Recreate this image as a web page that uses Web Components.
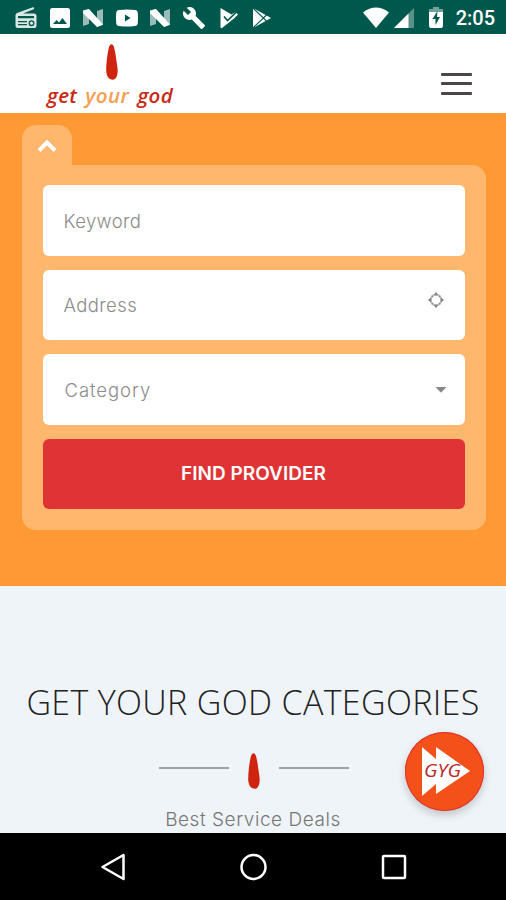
<!DOCTYPE html>
<html lang="en">
<head>
<meta charset="utf-8">
<title>Get Your God</title>
<style>
html,body{margin:0;height:100%}
body{font-family:Inter,"Open Sans",sans-serif;background:#eff4f8}
</style>
</head>
<body>
<gyg-app></gyg-app>
<script>
function define(name, html) {
  const template = document.createElement('template');
  template.innerHTML = html;
  customElements.define(name, class extends HTMLElement {
    constructor() {
      super();
      this.attachShadow({mode: 'open'}).append(template.content.cloneNode(true));
    }
  });
}

define('status-bar', `
<style>
:host{display:flex;height:34px;box-sizing:border-box;background:#00574b;color:#fff;justify-content:space-between;padding:6px 11px 5px 14px;align-items:center}
div{display:flex;align-items:center}
svg{display:block;fill:#fff}
.left{gap:9.6px}
.time{font:500 20px/23px Roboto,sans-serif;letter-spacing:0;margin:2px 0 0 13px}
</style>
<div class="left">
<svg width="24" height="24" viewBox="0 0 24 24"><path opacity=".85" d="M3 7 19.500 1l.8 2L9 7.500h11q2.500 0 2.500 2.500v10q0 2-2 2h-17q-2 0-2-2V9.500Q1.500 7.500 3 7z"/><path fill="#00574b" d="M4 10h16v2.200H4zM4 15h9v1.300H4zM4 18h9v1.300H4z"/><circle cx="17.500" cy="17.200" r="2.300" fill="none" stroke="#00574b" stroke-width="1.300"/></svg>
<svg width="24" height="24" viewBox="0 0 24 24"><path fill-rule="evenodd" d="M4.500 2h15Q22 2 22 4.500v15Q22 22 19.500 22h-15Q2 22 2 19.500v-15Q2 2 4.500 2zM5 18h14l-4.500-6-3.500 4.500L8.500 14z"/></svg>
<svg width="24" height="24" viewBox="0 0 24 24"><path opacity=".6" d="M2 5 8 3v15l-6 2zM16 5l6-2v16l-6 2z"/><path d="M2 4.500 8 3l14 15.500-6 2.500L2 7z"/></svg>
<svg width="24" height="24" viewBox="0 0 24 24"><path fill-rule="evenodd" d="M4 4q8-1 16 0 2.500 0 2.800 3 .5 5 0 10-.3 3-2.800 3-8 1-16 0-2.500 0-2.800-3-.5-5 0-10Q1.500 4 4 4zM10 8.500v7l5.500-3.500z"/></svg>
<svg width="24" height="24" viewBox="0 0 24 24"><path opacity=".6" d="M2 5 8 3v15l-6 2zM16 5l6-2v16l-6 2z"/><path d="M2 4.500 8 3l14 15.500-6 2.500L2 7z"/></svg>
<svg width="24" height="24" viewBox="0 0 24 24"><path d="M22.700 19l-9.100-9.100c.9-2.300.4-5-1.500-6.900-2-2-5-2.400-7.400-1.300L9 6 6 9 1.600 4.700C.4 7.100.9 10.100 2.900 12.100c1.900 1.900 4.600 2.400 6.900 1.500l9.100 9.100c.4.400 1 .4 1.400 0l2.300-2.300c.5-.4.5-1.100.1-1.400z"/></svg>
<svg width="24" height="24" viewBox="0 0 24 24"><path d="M4.500 2 15.500 8.500l4-2.500 2.500 2.500-4 4L6 22q-1.500.5-1.500-1z"/><path fill="none" stroke="#00574b" stroke-width="1.700" d="m8 10.500 3.500 4 9-8.500"/></svg>
<svg width="24" height="24" viewBox="0 0 24 24"><path d="M4 2 22 12 4 22z"/><path fill="none" stroke="#00574b" stroke-width="1.100" d="m4 2 13.500 13M4 22 17.500 9"/></svg>
</div>
<div>
<svg width="26" height="22" viewBox="0 0 26 22"><path d="M0 5.500Q13-4.500 26 5.500L13 21z"/></svg>
<svg width="20" height="20" viewBox="0 0 20 20" style="margin-left:5px"><path opacity=".35" d="M20 0v20H0z"/><path d="M14.500 5.500V20H0z"/></svg>
<svg width="14" height="21" viewBox="0 0 14 21" style="margin-left:15px"><path opacity=".45" d="M4 0h6v2h4v5H0V2h4z"/><path d="M0 5h14v14q0 2-2 2H2q-2 0-2-2z"/><path fill="#00574b" d="m8.500 4-5 8h3v6l4.500-8H8z"/></svg>
<span class="time">2:05</span>
</div>`);

define('flame-mark', `
<style>:host{display:block;width:12px;height:36px}svg{display:block;width:100%;height:100%}</style>
<svg viewBox="0 0 12 36" preserveAspectRatio="none"><path fill="#cf2410" d="M5.300.2C7.300 0 8.400 3 9.500 10c.6 5 2 12 2.200 16 .2 6-2 9.800-4.900 9.800C2.800 35.800.2 32 .2 26 .3 18 1.500 10 2.500 5 3.200 2 4 .4 5.300.2z"/></svg>`);

define('site-header', `
<style>
:host{display:flex;height:79px;box-sizing:border-box;background:#fff;justify-content:space-between;align-items:flex-start;padding:9.500px 34px 0 46px}
.logo{display:flex;flex-direction:column;align-items:center;width:128px}
flame-mark{height:36px;margin-left:4px}
.name{font:italic 600 20.500px/24px "Open Sans",sans-serif;color:#c72a17;white-space:nowrap;display:flex;justify-content:space-between;width:126px;margin-top:3px;letter-spacing:.3px}
.name i{color:#f3a052;letter-spacing:.5px}
.menu{display:grid;gap:6.700px;padding-top:29px;width:31px}
.menu b{height:3px;background:#4b4647;border-radius:1px}
</style>
<div class="logo"><flame-mark></flame-mark><div class="name"><span>get</span><i>your</i><span>god</span></div></div>
<div class="menu"><b></b><b></b><b></b></div>`);

define('form-field', `
<style>
:host{display:flex;height:70.500px;box-sizing:border-box;background:#fff;border-radius:6px;padding:1px 18px 0 21px;align-items:center;justify-content:space-between;color:#8c8c8c;font:300 18.500px/28px Inter,sans-serif;letter-spacing:var(--track,0)}
</style>
<slot></slot><slot name="icon"></slot>`);

define('search-panel', `
<style>
:host{display:block;height:473px;box-sizing:border-box;background:#ff9933;padding:12px 20.500px 0 21.500px}
.tab{width:50.500px;height:39.500px;border-radius:14px 14px 0 0;background:#ffb66d;display:flex;justify-content:center;padding-top:15px;box-sizing:border-box}
.box{height:365.500px;box-sizing:border-box;background:#ffb66d;border-radius:0 14px 14px 14px;padding:20.500px 21px;display:flex;flex-direction:column;gap:14px}
svg{display:block}
button{height:70px;flex:none;border:0;border-radius:6px;background:#df3335;color:#fff;font:600 19px/28px Inter,sans-serif;letter-spacing:.02px;padding:0}
</style>
<div class="tab"><svg width="20" height="12" viewBox="0 0 20 12"><path d="m2 10.500 8-8 8 8" fill="none" stroke="#fff" stroke-width="4"/></svg></div>
<div class="box">
<form-field style="--track:.4px">Keyword</form-field>
<form-field style="--track:.4px">Address<svg slot="icon" width="18" height="18" viewBox="0 0 18 18" style="margin:-11px 2px 0 0"><circle cx="9" cy="9" r="5.300" fill="none" stroke="#888" stroke-width="1.800"/><path fill="#888" stroke="#fff" stroke-width=".5" d="m9 .5 3.300 4.300H5.700zM9 17.500l3.300-4.300H5.700zM.5 9l4.300-3.300v6.600zM17.500 9l-4.300-3.300v6.600z"/></svg></form-field>
<form-field style="--track:.95px;padding-left:22px">Category<svg slot="icon" width="12" height="6" viewBox="0 0 12 6"><path fill="#888" d="M.5 0h11L6 5.800z"/></svg></form-field>
<button>FIND PROVIDER</button>
</div>`);

define('category-section', `
<style>
:host{display:flex;flex-direction:column;align-items:center;height:247px;box-sizing:border-box;background:#eff4f8;padding-top:92px;overflow:hidden}
h1{margin:0;font:300 34px/48px "Open Sans",sans-serif;letter-spacing:.33px;color:#222;white-space:nowrap}
.rule{display:flex;align-items:center;gap:19px;margin-top:27px;padding-left:1px}
.rule b{width:70px;height:2px;background:#a0a3a6;margin-top:-6px}
p{margin:16.500px 0 0;font:300 19px/28px Inter,sans-serif;letter-spacing:.55px;color:#777;white-space:nowrap}
</style>
<h1>GET YOUR GOD CATEGORIES</h1>
<div class="rule"><b></b><flame-mark></flame-mark><b></b></div>
<p>Best Service Deals</p>`);

define('play-badge', `
<style>
:host{position:absolute;left:405px;top:732px;width:79px;height:79px;border-radius:50%;background:#f4511a;box-shadow:0 4px 8px #0003,inset 0 0 0 1px #dd3330}
svg{display:block}
text{font:italic 400 18px "Open Sans",sans-serif;fill:#b92629}
</style>
<svg width="79" height="79" viewBox="0 0 79 79"><path fill="#fff" d="M17 15l14 12V15l34 24-34 23V52L17 64z"/><text x="19" y="44.500" textLength="37" lengthAdjust="spacingAndGlyphs">GYG</text></svg>`);

define('nav-bar', `
<style>
:host{display:flex;height:67px;background:#000;align-items:center;justify-content:space-between;padding:0 98px 0 100px;box-sizing:border-box}
svg{display:block;fill:none;stroke:#fff;stroke-width:2.500}
</style>
<svg width="28" height="28" viewBox="0 0 28 28"><path stroke-linejoin="round" d="M23.500 2v24L2.500 14z"/></svg>
<svg width="28" height="28" viewBox="0 0 28 28"><circle cx="13.500" cy="14" r="12"/></svg>
<svg width="28" height="28" viewBox="0 0 28 28"><rect x="3" y="3" width="22" height="22" rx="1"/></svg>`);

define('gyg-app', `
<style>:host{display:block;width:506px;height:900px;overflow:hidden;position:relative}</style>
<status-bar></status-bar><site-header></site-header><search-panel></search-panel><category-section></category-section><nav-bar></nav-bar><play-badge></play-badge>`);
</script>
</body>
</html>
